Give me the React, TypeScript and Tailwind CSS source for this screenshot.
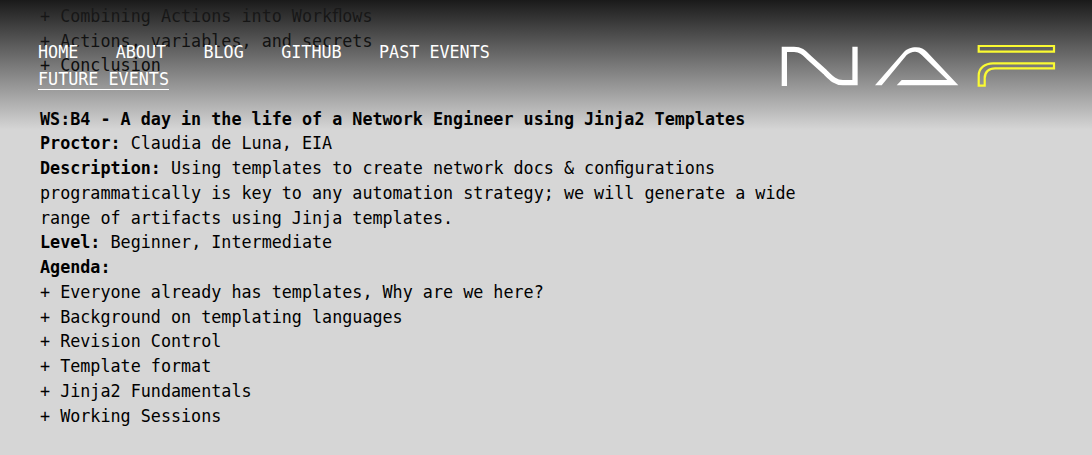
import React from "react";

const navLinks = ["HOME", "ABOUT", "BLOG", "GITHUB", "PAST EVENTS"];

const agenda = [
  "+ Everyone already has templates, Why are we here?",
  "+ Background on templating languages",
  "+ Revision Control",
  "+ Template format",
  "+ Jinja2 Fundamentals",
  "+ Working Sessions",
];

const Logo = () => (
  <svg width="276" height="44" viewBox="0 0 276 44" fill="none" className="mt-[5px] shrink-0">
    <path
      d="M4.35 42V5.4H14C22 5.4 25 10 30 14.5L45 28C51 34 55 38.7 63 38.7H75V2.7"
      stroke="#fff"
      strokeWidth="5.3"
    />
    <path
      d="M95 41.3L123.3 8.7C127 4.7 131 3.3 136 3.3C141 3.3 144 5 147 8L178.3 41.3H116.7L121.7 36H167.3L141.7 11C139 8.7 137.5 7.7 135 7.7C132 7.7 129 9 126.7 11L101.7 41.3Z"
      fill="#fff"
    />
    <path d="M198.7 2H274V7.7H198.7Z" stroke="#fafa32" strokeWidth="2.2" />
    <path
      d="M198.7 41.7V31.5C198.7 24 205 19.3 213 19.3H274V24.3H215C209 24.3 204.7 28 204.7 34V41.7Z"
      stroke="#fafa32"
      strokeWidth="2.2"
    />
  </svg>
);

export default function App() {
  return (
    <div className="relative h-[455px] w-[1092px] overflow-hidden bg-[#d6d6d6] font-['DejaVu_Sans_Mono',monospace] text-[16.74px] leading-[24.75px] text-black">
      <main className="-mt-[21px] px-10">
        <p>+ Executing actions, and other tasks,</p>
        <p>+ Combining Actions into Work&#xFB02;ows</p>
        <p>+ Actions, variables, and secrets</p>
        <p>+ Conclusion</p>
        <p className="h-[28.5px]">&nbsp;</p>
        <p className="font-bold">WS:B4 - A day in the life of a Network Engineer using Jinja2 Templates</p>
        <p>
          <b>Proctor:</b> Claudia de Luna, EIA
        </p>
        <p className="w-[780px]">
          <b>Description:</b> Using templates to create network docs &amp; con&#xFB01;gurations programmatically is key
          to any automation strategy; we will generate a wide range of artifacts using Jinja templates.
        </p>
        <p>
          <b>Level:</b> Beginner, Intermediate
        </p>
        <p className="font-bold">Agenda:</p>
        {agenda.map((item) => (
          <p key={item}>{item}</p>
        ))}
      </main>

      <header className="absolute inset-x-0 top-0 flex h-[130px] items-start justify-between bg-gradient-to-b from-[#1a1a1a] to-[#d6d6d6]/0 pl-[38px] pr-[36px] pt-[39px] text-white">
        <nav className="flex w-[500px] flex-wrap gap-x-[37.4px] gap-y-[3px] leading-[27px]">
          {navLinks.map((link) => (
            <a key={link}>{link}</a>
          ))}
          <a className="border-b border-white leading-[20px]">FUTURE EVENTS</a>
        </nav>
        <Logo />
      </header>
    </div>
  );
}
